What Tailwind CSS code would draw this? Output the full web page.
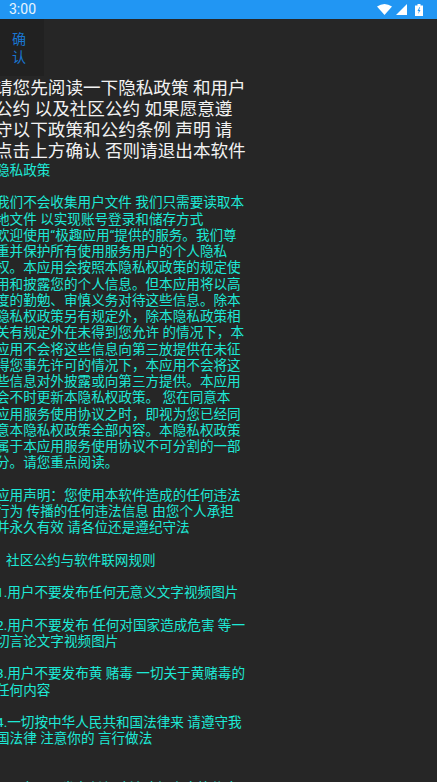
<!DOCTYPE html>
<html><head><meta charset="utf-8"><script src="https://cdn.jsdelivr.net/npm/@tailwindcss/browser@4"></script></head>
<body class="m-0 overflow-hidden bg-[#262626]">
<div class="flex h-[782px] w-[437px] flex-col overflow-hidden bg-[#262626] font-['Roboto','Noto_Sans_CJK_SC',sans-serif]">
  <div class="flex h-[19px] shrink-0 items-center justify-between bg-[#2196f3] pl-[9px] pr-[14px] text-[14px] text-white/90">
    <span>3:00</span>
    <div class="flex items-center gap-[4px]">
      <svg width="15" height="11" viewBox="0 0 15 11"><path d="M0 2.500Q7.500-2.500 15 2.500L7.500 11Z" fill="#fff"/></svg>
      <svg width="11" height="11" viewBox="0 0 11 11"><path d="M0 11L11 0V11Z" fill="#fff"/></svg>
      <svg width="8" height="12" viewBox="0 0 8 12" class="ml-[4px]"><path d="M0 1.500H2.500V0H5.500V1.500H8V12H0Z" fill="#fff"/><path d="M4.500 3L2.500 7H3.800L3.200 10L5.500 6H4.200L5 3Z" fill="#2196f3"/></svg>
    </div>
  </div>
  <div class="flex h-[57px] w-[44px] shrink-0 items-center justify-center bg-[#212121] pr-[6px] text-center text-[14px] leading-[18px] text-[#1976d2]">确<br>认</div>
  <div class="ml-[-5px] mt-[2px] whitespace-nowrap text-[17.6px] leading-[21px] text-[#f2f2f2]">请您先阅读一下隐私政策 和用户<br>公约 以及社区公约 如果愿意遵<br>守以下政策和公约条例 声明 请<br>点击上方确认 否则请退出本软件</div>
  <div class="ml-[-4px] whitespace-nowrap text-[13.6px] leading-[16.23px] text-[#1de9d6]">隐私政策<br><br>我们不会收集用户文件 我们只需要读取本<br>地文件 以实现账号登录和储存方式<br>欢迎使用“极趣应用“提供的服务。我们尊<br>重并保护所有使用服务用户的个人隐私<br>权。本应用会按照本隐私权政策的规定使<br>用和披露您的个人信息。但本应用将以高<br>度的勤勉、审慎义务对待这些信息。除本<br>隐私权政策另有规定外，除本隐私政策相<br>关有规定外在未得到您允许 的情况下，本<br>应用不会将这些信息向第三放提供在未征<br>得您事先许可的情况下，本应用不会将这<br>些信息对外披露或向第三方提供。本应用<br>会不时更新本隐私权政策。 您在同意本<br>应用服务使用协议之时，即视为您已经同<br>意本隐私权政策全部内容。本隐私权政策<br>属于本应用服务使用协议不可分割的一部<br>分。请您重点阅读。<br><br>应用声明：您使用本软件造成的任何违法<br>行为 传播的任何违法信息 由您个人承担<br>并永久有效 请各位还是遵纪守法<br><br>&nbsp;&nbsp;&nbsp;社区公约与软件联网规则<br><br>1.用户不要发布任何无意义文字视频图片<br><br>2.用户不要发布 任何对国家造成危害 等一<br>切言论文字视频图片<br><br>3.用户不要发布黄 赌毒 一切关于黄赌毒的<br>任何内容<br><br>4.一切按中华人民共和国法律来 请遵守我<br>国法律 注意你的 言行做法<br><br><br><span class="relative top-[1px]">5.用户不要发布任何违法违规内容等信息</span></div>
</div>
</body></html>
